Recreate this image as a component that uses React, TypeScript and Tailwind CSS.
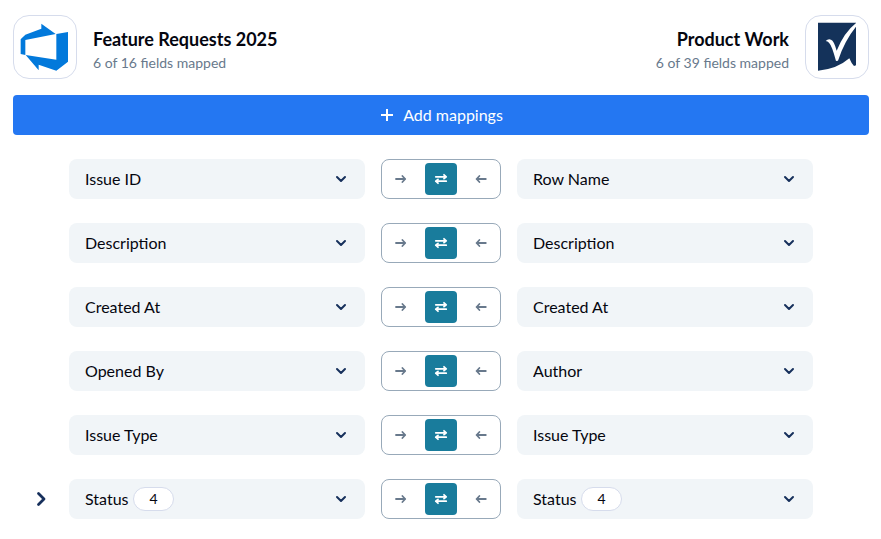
import { useState } from "react";
import clsx from "clsx";

type Direction = "right" | "both" | "left";

interface Mapping {
  source: string;
  target: string;
  values?: number;
}

const MAPPINGS: Mapping[] = [
  { source: "Issue ID", target: "Row Name" },
  { source: "Description", target: "Description" },
  { source: "Created At", target: "Created At" },
  { source: "Opened By", target: "Author" },
  { source: "Issue Type", target: "Issue Type" },
  { source: "Status", target: "Status", values: 4 },
];

const DIRECTIONS: { value: Direction; label: string }[] = [
  { value: "right", label: "Sync left to right" },
  { value: "both", label: "Sync both ways" },
  { value: "left", label: "Sync right to left" },
];

const SOURCE_FIELDS = MAPPINGS.map((m) => m.source);
const TARGET_FIELDS = MAPPINGS.map((m) => m.target);

function AzureLogo() {
  return (
    <svg viewBox="42 24 186 186" className="size-full" fill="#0279db" aria-hidden="true">
      <path d="M62 94 76 80 124 62V47L167 78 76 96V141L62 138Z" />
      <path d="M169 78 204 72V161L169 188 116 170V187L77 141 169 155Z" />
    </svg>
  );
}

function SmartsheetLogo() {
  return (
    <svg viewBox="18 24 186 186" className="size-full" aria-hidden="true">
      <path fill="#14325a" d="M54 44H168V172L162 174Q154 166 148 151 110 184 54 188Z" />
      <path
        fill="#fff"
        d="M77 99Q84 92 93 95 102 98 110 128 132 73 169 44V55Q134 98 114 158L108 159Q96 113 87 104 83 100 77 99Z"
      />
    </svg>
  );
}

function DirectionIcon({ direction }: { direction: Direction }) {
  return (
    <svg
      viewBox="0 0 16 16"
      className="size-4"
      fill="none"
      stroke="currentColor"
      strokeWidth="1.8"
      strokeLinecap="round"
      strokeLinejoin="round"
      aria-hidden="true"
    >
      {direction === "right" && <path d="M3 8H12.2M9.4 5 12.2 8 9.4 11" />}
      {direction === "left" && <path d="M12.8 8H3.6M6.4 5 3.6 8 6.4 11" />}
      {direction === "both" && (
        <path d="M2.8 5.8H13.2M11 3.8 13.2 5.8 11 7.6M13.2 10.2H2.8M5 8.4 2.8 10.2 5 12.2" />
      )}
    </svg>
  );
}

interface FieldSelectProps {
  label: string;
  initial: string;
  options: string[];
  values?: number;
}

function FieldSelect({ label, initial, options, values }: FieldSelectProps) {
  const [field, setField] = useState(initial);

  return (
    <div className="relative min-w-0">
      <select
        aria-label={label}
        value={field}
        onChange={(e) => setField(e.target.value)}
        className="h-10 w-full appearance-none rounded-lg bg-[#f1f5f8] px-4 text-base text-[#05060f]"
      >
        {options.map((option) => (
          <option key={option}>{option}</option>
        ))}
      </select>
      {values !== undefined && (
        <span className="pointer-events-none absolute top-2 left-16 flex h-6 w-[41px] items-center justify-center rounded-full border border-[#d6dcec] bg-white text-sm text-[#05060f]">
          {values}
        </span>
      )}
      <svg
        viewBox="0 0 16 16"
        className="pointer-events-none absolute top-3 right-4 size-4"
        fill="none"
        stroke="#17305c"
        strokeWidth="2"
        strokeLinecap="round"
        strokeLinejoin="round"
        aria-hidden="true"
      >
        <path d="M4 6 8 10 12 6" />
      </svg>
    </div>
  );
}

function DirectionToggle() {
  const [direction, setDirection] = useState<Direction>("both");

  return (
    <div className="flex h-10 items-center justify-center gap-2 rounded-lg border border-[#98a9b9]">
      {DIRECTIONS.map(({ value, label }) => (
        <button
          key={value}
          type="button"
          aria-label={label}
          aria-pressed={direction === value}
          onClick={() => setDirection(value)}
          className={clsx(
            "flex size-8 items-center justify-center rounded",
            direction === value ? "bg-[#197c9c] text-white" : "text-[#68798c]"
          )}
        >
          <DirectionIcon direction={value} />
        </button>
      ))}
    </div>
  );
}

function MappingRow({ mapping }: { mapping: Mapping }) {
  return (
    <li className="grid grid-cols-[40px_1fr_120px_1fr_40px] items-center gap-4">
      {mapping.values !== undefined && (
        <button
          type="button"
          aria-label={`Expand ${mapping.source} values`}
          className="flex size-6 items-center justify-center justify-self-end"
        >
          <svg
            viewBox="0 0 24 24"
            className="size-6"
            fill="none"
            stroke="#17305c"
            strokeWidth="2.8"
            strokeLinecap="round"
            strokeLinejoin="round"
            aria-hidden="true"
          >
            <path d="M9.5 6.5 15 12 9.5 17.5" />
          </svg>
        </button>
      )}
      <div className="col-start-2 min-w-0">
        <FieldSelect
          label="Source field"
          initial={mapping.source}
          options={SOURCE_FIELDS}
          values={mapping.values}
        />
      </div>
      <DirectionToggle />
      <FieldSelect
        label="Target field"
        initial={mapping.target}
        options={TARGET_FIELDS}
        values={mapping.values}
      />
    </li>
  );
}

export default function App() {
  return (
    <main className="min-h-screen bg-white pt-[15px] pr-3 pb-5 pl-[13px] font-['Lato',sans-serif] text-[#05060f]">
      <header className="flex items-center justify-between">
        <div className="flex items-center gap-4">
          <div className="size-16 rounded-2xl border border-[#d6dcec]">
            <AzureLogo />
          </div>
          <div className="pt-2">
            <h2 className="text-lg leading-6 font-bold">Feature Requests 2025</h2>
            <p className="text-sm leading-6 text-[#68798c]">6 of 16 fields mapped</p>
          </div>
        </div>
        <div className="flex items-center gap-4">
          <div className="pt-2 text-right">
            <h2 className="text-lg leading-6 font-bold">Product Work</h2>
            <p className="text-sm leading-6 text-[#68798c]">6 of 39 fields mapped</p>
          </div>
          <div className="size-16 rounded-2xl border border-[#d6dcec]">
            <SmartsheetLogo />
          </div>
        </div>
      </header>

      <button
        type="button"
        className="mt-4 flex h-10 w-full items-center justify-center gap-2 rounded bg-[#2477f2] text-base text-white"
      >
        <svg
          viewBox="0 0 16 16"
          className="size-4"
          fill="none"
          stroke="currentColor"
          strokeWidth="2"
          aria-hidden="true"
        >
          <path d="M8 2V14M2 8H14" />
        </svg>
        Add mappings
      </button>

      <ul className="mt-6 flex flex-col gap-6">
        {MAPPINGS.map((mapping) => (
          <MappingRow key={mapping.source} mapping={mapping} />
        ))}
      </ul>
    </main>
  );
}
